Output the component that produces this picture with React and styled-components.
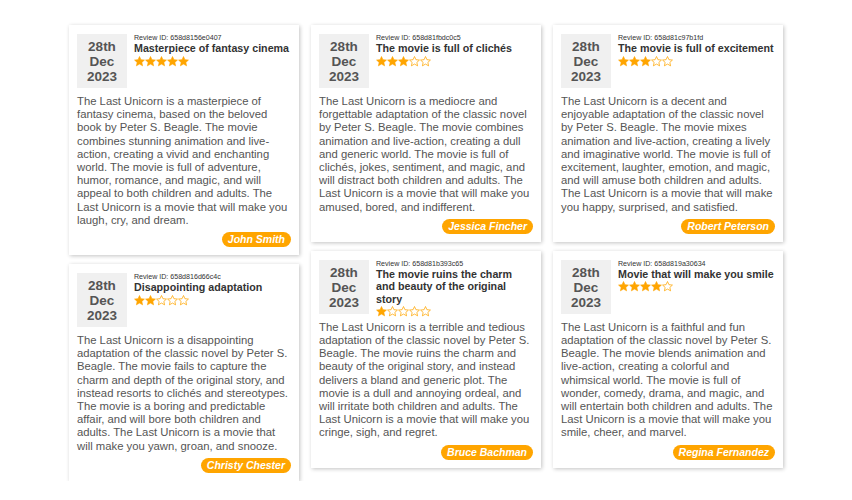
import React from "react";
import styled, { createGlobalStyle } from "styled-components";

const Global = createGlobalStyle`
  html, body { margin: 0; padding: 0; background: #ffffff; }
  body { font-family: "Liberation Sans", Arial, sans-serif; }
`;

const Board = styled.main`
  display: flex;
  justify-content: center;
  align-items: flex-start;
  gap: 12px;
  padding-top: 25px;
`;

const Column = styled.div`
  width: 230px;
  display: flex;
  flex-direction: column;
  gap: 9px;
`;

const Card = styled.article`
  background: #fff;
  box-shadow: 1px 1px 4px rgba(0, 0, 0, 0.24);
  padding: 9px 8px 8px 8px;
`;

const Header = styled.header`
  display: flex;
  align-items: flex-start;
  margin-bottom: 2px;
`;

const DateBox = styled.div`
  flex: 0 0 50px;
  width: 50px;
  background: #f0f0f0;
  color: #555;
  font-weight: bold;
  font-size: 13.5px;
  line-height: 15px;
  text-align: center;
  padding: 5px 0 4px;
  margin-bottom: 5px;
`;

const Info = styled.div`
  margin-left: 7px;
  min-width: 0;
  flex: 1;
`;

const ReviewId = styled.div`
  font-size: 7.1px;
  line-height: 8px;
  color: #333;
`;

const Title = styled.h3`
  margin: 0;
  font-size: 10.7px;
  line-height: 12.5px;
  font-weight: bold;
  color: #333;
`;

const Stars = styled.div`
  display: flex;
  align-items: center;
  height: 13px;
`;

const Body = styled.p`
  margin: 0;
  font-size: 11.3px;
  line-height: 13.2px;
  color: #555;
`;

const Footer = styled.footer`
  display: flex;
  justify-content: flex-end;
  margin-top: 5px;
`;

const Author = styled.span`
  background: #ffa500;
  color: #fff;
  font-weight: bold;
  font-style: italic;
  font-size: 10.5px;
  line-height: 11px;
  padding: 2px 6px;
  border-radius: 8px;
`;

const STAR =
  "M5.5 0.5 L6.95 3.7 L10.45 4.05 L7.85 6.4 L8.6 9.85 L5.5 8.05 L2.4 9.85 L3.15 6.4 L0.55 4.05 L4.05 3.7 Z";

const Star = ({ filled }) => (
  <svg width="11" height="11" viewBox="0 0 11 11">
    <path
      d={STAR}
      fill={filled ? "#ffa500" : "none"}
      stroke="#ffa500"
      strokeWidth={filled ? 0.6 : 0.75}
      strokeLinejoin="round"
    />
  </svg>
);

const Rating = ({ value }) => (
  <Stars>
    {[1, 2, 3, 4, 5].map((i) => (
      <Star key={i} filled={i <= value} />
    ))}
  </Stars>
);

const columns = [
  [
    {
      id: "658d8156e0407",
      title: "Masterpiece of fantasy cinema",
      rating: 5,
      text: "The Last Unicorn is a masterpiece of fantasy cinema, based on the beloved book by Peter S. Beagle. The movie combines stunning animation and live-action, creating a vivid and enchanting world. The movie is full of adventure, humor, romance, and magic, and will appeal to both children and adults. The Last Unicorn is a movie that will make you laugh, cry, and dream.",
      author: "John Smith",
    },
    {
      id: "658d816d66c4c",
      title: "Disappointing adaptation",
      rating: 2,
      text: "The Last Unicorn is a disappointing adaptation of the classic novel by Peter S. Beagle. The movie fails to capture the charm and depth of the original story, and instead resorts to clichés and stereotypes. The movie is a boring and predictable affair, and will bore both children and adults. The Last Unicorn is a movie that will make you yawn, groan, and snooze.",
      author: "Christy Chester",
    },
  ],
  [
    {
      id: "658d81fbdc0c5",
      title: "The movie is full of clichés",
      rating: 3,
      text: "The Last Unicorn is a mediocre and forgettable adaptation of the classic novel by Peter S. Beagle. The movie combines animation and live-action, creating a dull and generic world. The movie is full of clichés, jokes, sentiment, and magic, and will distract both children and adults. The Last Unicorn is a movie that will make you amused, bored, and indifferent.",
      author: "Jessica Fincher",
    },
    {
      id: "658d81b393c65",
      title: "The movie ruins the charm and beauty of the original story",
      rating: 1,
      text: "The Last Unicorn is a terrible and tedious adaptation of the classic novel by Peter S. Beagle. The movie ruins the charm and beauty of the original story, and instead delivers a bland and generic plot. The movie is a dull and annoying ordeal, and will irritate both children and adults. The Last Unicorn is a movie that will make you cringe, sigh, and regret.",
      author: "Bruce Bachman",
    },
  ],
  [
    {
      id: "658d81c97b1fd",
      title: "The movie is full of excitement",
      rating: 3,
      text: "The Last Unicorn is a decent and enjoyable adaptation of the classic novel by Peter S. Beagle. The movie mixes animation and live-action, creating a lively and imaginative world. The movie is full of excitement, laughter, emotion, and magic, and will amuse both children and adults. The Last Unicorn is a movie that will make you happy, surprised, and satisfied.",
      author: "Robert Peterson",
    },
    {
      id: "658d819a30634",
      title: "Movie that will make you smile",
      rating: 4,
      text: "The Last Unicorn is a faithful and fun adaptation of the classic novel by Peter S. Beagle. The movie blends animation and live-action, creating a colorful and whimsical world. The movie is full of wonder, comedy, drama, and magic, and will entertain both children and adults. The Last Unicorn is a movie that will make you smile, cheer, and marvel.",
      author: "Regina Fernandez",
    },
  ],
];

const ReviewCard = ({ r }) => (
  <Card>
    <Header>
      <DateBox>
        28th
        <br />
        Dec
        <br />
        2023
      </DateBox>
      <Info>
        <ReviewId>Review ID: {r.id}</ReviewId>
        <Title>{r.title}</Title>
        <Rating value={r.rating} />
      </Info>
    </Header>
    <Body>{r.text}</Body>
    <Footer>
      <Author>{r.author}</Author>
    </Footer>
  </Card>
);

export default function App() {
  return (
    <>
      <Global />
      <Board>
        {columns.map((col, i) => (
          <Column key={i}>
            {col.map((r) => (
              <ReviewCard key={r.id} r={r} />
            ))}
          </Column>
        ))}
      </Board>
    </>
  );
}
